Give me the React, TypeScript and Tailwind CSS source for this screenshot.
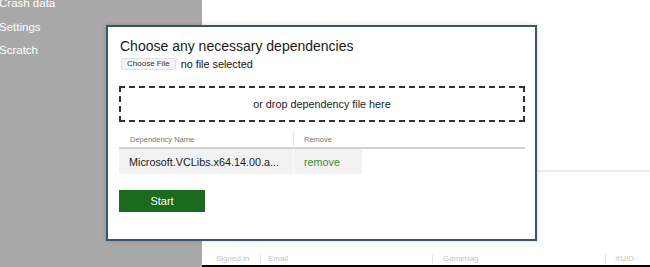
export default function App() {
  return (
    <div className="relative w-[650px] h-[267px] overflow-hidden flex bg-white font-['Liberation_Sans',Arial,sans-serif]">
      {/* Sidebar */}
      <aside className="w-[202px] shrink-0 bg-[#a9a9a9] text-white text-[11.5px]">
        <nav className="-mt-[8px] -ml-[1px] flex flex-col">
          {["Crash data", "Settings", "Scratch"].map((item) => (
            <div key={item} className="h-[23.5px] flex items-center">
              {item}
            </div>
          ))}
        </nav>
      </aside>

      {/* Main */}
      <main className="flex-1 flex flex-col">
        <div className="h-[172px] border-b-2 border-[#ececec]" />
        <div className="flex-1" />
        <div className="h-[15px] flex items-center border-b-2 border-black text-[8px] text-[#c4c4c4]">
          <div className="w-[58px] pl-[14px]">Signed in</div>
          <span className="w-px h-[9px] bg-[#e2e2e2]" />
          <div className="w-[171px] pl-[7px]">Email</div>
          <span className="w-px h-[9px] bg-[#e2e2e2]" />
          <div className="w-[172px] pl-[10px]">Gamertag</div>
          <span className="w-px h-[9px] bg-[#e2e2e2]" />
          <div className="pl-[9px]">XUID</div>
        </div>
      </main>

      {/* Dialog */}
      <div className="absolute left-[106px] top-[25px] w-[431px] h-[216px] bg-white border-2 border-[#3c5469] shadow-[0_0_4px_rgba(0,0,0,0.18)] pl-[11px] pr-[10px] pt-[11px] flex flex-col">
        <h2 className="text-[14px] leading-[16px] text-[#1a1a1a] pl-px">
          Choose any necessary dependencies
        </h2>
        <div className="mt-[2px] flex items-center pl-[2px]">
          <button className="h-[12px] px-[5px] flex items-center bg-[#f6f6f6] border border-[#dedede] rounded-[3px] text-[8px] text-[#333]">
            Choose File
          </button>
          <span className="ml-[5px] text-[10.8px] text-[#111]">no file selected</span>
        </div>

        <div className="mt-[14px] h-[36px] border-2 border-dashed border-[#333] flex items-center justify-center text-[10.8px] text-[#222]">
          or drop dependency file here
        </div>

        <div className="mt-[9px] grid grid-cols-[174px_69px_1fr]">
          <div className="h-[18px] flex items-center pl-[11px] text-[7.5px] text-[#777] border-b-2 border-[#d2d2d2]">
            Dependency Name
          </div>
          <div className="h-[18px] flex items-center pl-[10px] text-[7.5px] text-[#777] border-l border-[#e6e6e6] border-b-2 border-b-[#d2d2d2]">
            Remove
          </div>
          <div className="h-[18px] border-b-2 border-[#d2d2d2]" />
          <div className="h-[25px] flex items-center pl-[10px] bg-[#f2f2f2] text-[10.8px] text-[#1a1a1a] whitespace-nowrap">
            Microsoft.VCLibs.x64.14.00.a...
          </div>
          <div className="h-[25px] flex items-center pl-[10px] bg-[#f2f2f2] border-l border-[#fafafa] text-[10.8px] text-[#3a8a3a]">
            remove
          </div>
          <div className="h-[25px]" />
        </div>

        <button className="mt-[16px] w-[86px] h-[22px] bg-[#1b6a1f] text-white text-[11px] flex items-center justify-center">
          Start
        </button>
      </div>
    </div>
  );
}
